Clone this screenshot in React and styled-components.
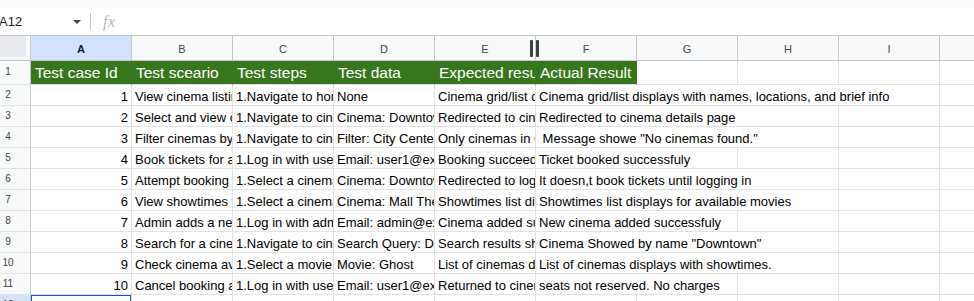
import React from "react";
import styled, { createGlobalStyle } from "styled-components";

const GlobalStyle = createGlobalStyle`
  html, body {
    margin: 0;
    padding: 0;
    background: #ffffff;
    overflow: hidden;
  }
  body {
    font-family: "Liberation Sans", Arial, sans-serif;
  }
`;

const Page = styled.div`
  width: 974px;
  height: 301px;
  overflow: hidden;
  background: #ffffff;
`;

const TopStrip = styled.div`
  height: 8px;
  background: #f9fbfd;
`;

const FormulaBar = styled.div`
  display: flex;
  align-items: center;
  height: 27px;
  border-bottom: 1px solid #c4c7c5;
  background: #ffffff;
`;

const NameBox = styled.div`
  display: flex;
  align-items: center;
  justify-content: space-between;
  width: 82px;
  padding-right: 9px;
  font-size: 13px;
  color: #1f1f1f;
  margin-left: -1px;
`;

const Caret = styled.span`
  width: 0;
  height: 0;
  border-left: 4px solid transparent;
  border-right: 4px solid transparent;
  border-top: 4px solid #444746;
`;

const Divider = styled.span`
  width: 1px;
  height: 17px;
  background: #c4c7c5;
`;

const Fx = styled.span`
  margin-left: 12px;
  font-family: "Liberation Serif", "Times New Roman", serif;
  font-style: italic;
  font-size: 16px;
  color: #b5b8bb;
  letter-spacing: 0.5px;
`;

const Grid = styled.div`
  display: grid;
  grid-template-columns: 31px repeat(10, 101px);
  width: 1041px;
`;

const Corner = styled.div`
  box-sizing: border-box;
  height: 25px;
  background: #f8f9fa;
  border-right: 1px solid #c4c7c5;
  border-bottom: 1px solid #c4c7c5;
  padding: 0 4px 3px 0;
  &::before {
    content: "";
    display: block;
    width: 100%;
    height: 100%;
    background: #e8eaed;
  }
`;

const ColHead = styled.div`
  position: relative;
  box-sizing: border-box;
  height: 25px;
  display: flex;
  align-items: center;
  justify-content: center;
  font-size: 11px;
  color: ${(p) => (p.$active ? "#041e49" : "#444746")};
  font-weight: ${(p) => (p.$active ? 700 : 400)};
  background: ${(p) => (p.$active ? "#d3e3fd" : "#f8f9fa")};
  border-right: 1px solid #c4c7c5;
  border-bottom: 1px solid #c4c7c5;
  padding-top: 1px;
`;

const ResizeHandle = styled.span`
  position: absolute;
  top: 4px;
  right: -4px;
  z-index: 2;
  display: flex;
  gap: 3px;
  &::before,
  &::after {
    content: "";
    width: 3px;
    height: 17px;
    border-radius: 1px;
    background: #3c4043;
  }
`;

const RowHead = styled.div`
  box-sizing: border-box;
  height: ${(p) => p.$h}px;
  display: flex;
  align-items: center;
  justify-content: center;
  padding: 0 14px 2px 0;
  font-size: 10px;
  color: #444746;
  background: ${(p) => (p.$active ? "#d3e3fd" : "#f8f9fa")};
  border-right: 1px solid #c4c7c5;
  border-bottom: 1px solid #e1e3e1;
`;

const Cell = styled.div`
  position: relative;
  box-sizing: border-box;
  height: ${(p) => p.$h}px;
  grid-column: span ${(p) => p.$span || 1};
  display: flex;
  align-items: flex-end;
  justify-content: ${(p) => (p.$right ? "flex-end" : "flex-start")};
  padding: 0 3px 1px 3px;
  overflow: hidden;
  white-space: pre;
  font-size: 13px;
  color: #000000;
  background: #ffffff;
  border-right: 1px solid #e1e3e1;
  border-bottom: 1px solid #e1e3e1;
`;

const HeadCell = styled(Cell)`
  padding: 0 2px 2px 4px;
  font-size: 15.5px;
  color: #ffffff;
  background: #38761d;
  border-right-color: #38761d;
`;

const Selected = styled(Cell)`
  &::after {
    content: "";
    position: absolute;
    inset: -1px -1px 0 -1px;
    border: 2px solid #0b57d0;
    pointer-events: none;
  }
`;

const COLS = ["A", "B", "C", "D", "E", "F", "G", "H", "I", ""];

const HEADERS = [
  "Test case Id",
  "Test sceario",
  "Test steps",
  "Test data",
  "Expected result",
  "Actual Result",
];

// last value: how many columns the Actual Result text spills over
const ROWS = [
  [1, "View cinema listings", "1.Navigate to homepage", "None", "Cinema grid/list displayed", "Cinema grid/list displays with names, locations, and brief info", 4],
  [2, "Select and view cinema details", "1.Navigate to cinemas page", "Cinema: Downtown", "Redirected to cinema details page", "Redirected to cinema details page", 3],
  [3, "Filter cinemas by location", "1.Navigate to cinemas page", "Filter: City Center", "Only cinemas in City Center shown", " Message showe \"No cinemas found.\"", 3],
  [4, "Book tickets for a movie", "1.Log in with user account", "Email: user1@example.com", "Booking succeeds", "Ticket booked successfuly", 2],
  [5, "Attempt booking without login", "1.Select a cinema", "Cinema: Downtown", "Redirected to login page", "It doesn,t book tickets until logging in", 3],
  [6, "View showtimes for a cinema", "1.Select a cinema", "Cinema: Mall Theater", "Showtimes list displayed", "Showtimes list displays for available movies", 3],
  [7, "Admin adds a new cinema", "1.Log in with admin account", "Email: admin@example.com", "Cinema added successfully", "New cinema added successfuly", 2],
  [8, "Search for a cinema", "1.Navigate to cinemas page", "Search Query: Downtown", "Search results show Downtown", "Cinema Showed by name \"Downtown\"", 3],
  [9, "Check cinema availability", "1.Select a movie", "Movie: Ghost", "List of cinemas displayed", "List of cinemas displays with showtimes.", 3],
  [10, "Cancel booking and return", "1.Log in with user account", "Email: user1@example.com", "Returned to cinema page", "seats not reserved. No charges", 2],
];

const Empties = ({ count, h }) =>
  Array.from({ length: count }, (_, i) => <Cell key={"e" + i} $h={h} />);

export default function App() {
  return (
    <>
      <GlobalStyle />
      <Page>
        <TopStrip />
        <FormulaBar>
          <NameBox>
            <span>A12</span>
            <Caret />
          </NameBox>
          <Divider />
          <Fx>fx</Fx>
        </FormulaBar>

        <Grid>
          <Corner />
          {COLS.map((c, i) => (
            <ColHead key={"h" + i} $active={c === "A"}>
              {c}
              {c === "E" && <ResizeHandle />}
            </ColHead>
          ))}

          <RowHead $h={24}>1</RowHead>
          {HEADERS.map((t) => (
            <HeadCell key={t} $h={24}>
              {t}
            </HeadCell>
          ))}
          <Empties count={4} h={24} />

          {ROWS.map((r, idx) => {
            const [id, b, c, d, e, f, span] = r;
            return (
              <React.Fragment key={id}>
                <RowHead $h={21}>{idx + 2}</RowHead>
                <Cell $h={21} $right>
                  {id}
                </Cell>
                <Cell $h={21}>{b}</Cell>
                <Cell $h={21}>{c}</Cell>
                <Cell $h={21}>{d}</Cell>
                <Cell $h={21}>{e}</Cell>
                <Cell $h={21} $span={span}>
                  {f}
                </Cell>
                <Empties count={5 - span} h={21} />
              </React.Fragment>
            );
          })}

          <RowHead $h={21} $active>
            12
          </RowHead>
          <Selected $h={21} />
          <Empties count={9} h={21} />
        </Grid>
      </Page>
    </>
  );
}
